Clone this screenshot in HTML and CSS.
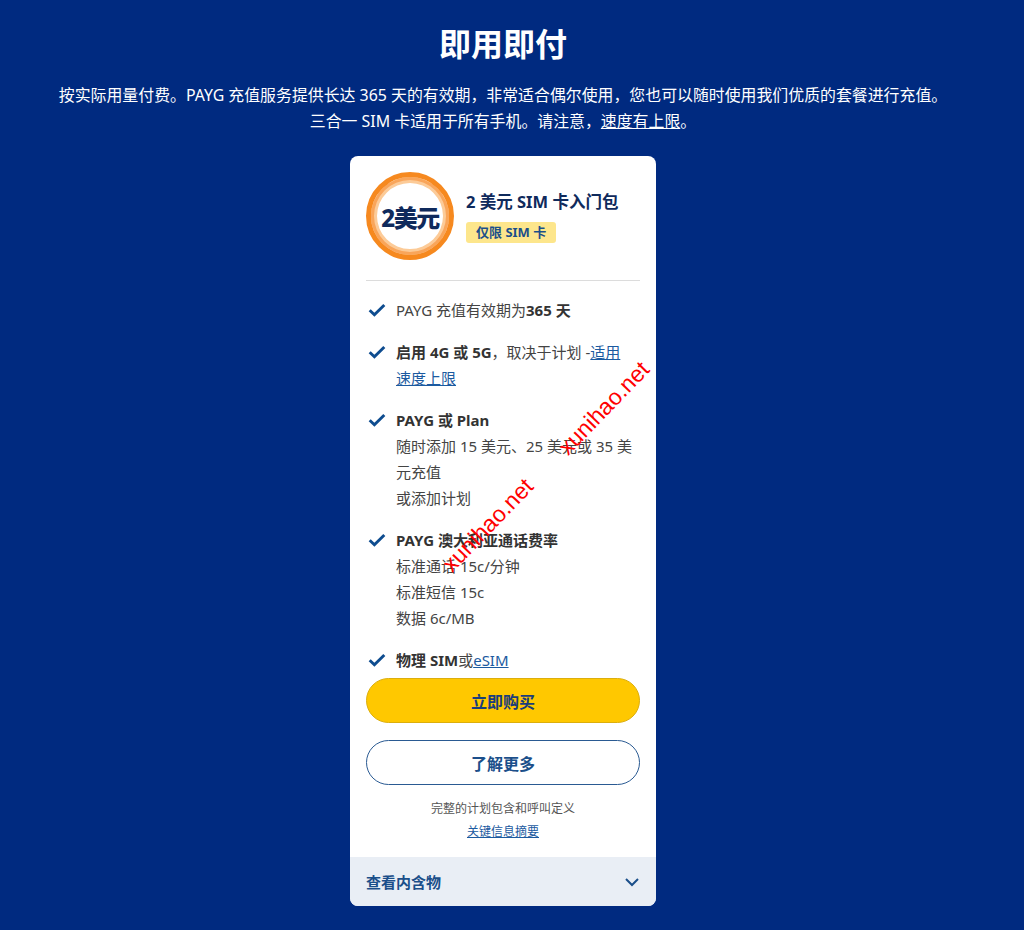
FILE: index.html
```html
<!DOCTYPE html>
<html lang="zh-CN">
<head>
    <meta charset="UTF-8">
    <meta name="viewport" content="width=device-width, initial-scale=1.0">
    <title>即用即付</title>
    <link rel="stylesheet" href="styles.css">
</head>
<body>

<div class="page">
    <header class="intro">
        <h1>即用即付</h1>
        <p>按实际用量付费。PAYG 充值服务提供长达 365 天的有效期，非常适合偶尔使用，您也可以随时使用我们优质的套餐进行充值。<br>
        三合一 SIM 卡适用于所有手机。请注意，<a href="#">速度有上限</a>。</p>
    </header>

    <!-- Starter kit card -->
    <div class="plan-card">
        <div class="card-body">
            <div class="plan-head">
                <div class="price-badge">2美元</div>
                <div>
                    <h3 class="plan-title">2 美元 SIM 卡入门包</h3>
                    <span class="plan-tag">仅限 SIM 卡</span>
                </div>
            </div>

            <ul class="features">
                <li>
                    <svg class="tick" viewBox="0 0 16 12"><path d="M1.5 6.2l4.2 4 8.8-8.7"/></svg>
                    <div>PAYG 充值有效期为<b>365 天</b></div>
                </li>
                <li>
                    <svg class="tick" viewBox="0 0 16 12"><path d="M1.5 6.2l4.2 4 8.8-8.7"/></svg>
                    <div><b>启用 4G 或 5G</b>，取决于计划 -<a href="#">适用<br>速度上限</a></div>
                </li>
                <li>
                    <svg class="tick" viewBox="0 0 16 12"><path d="M1.5 6.2l4.2 4 8.8-8.7"/></svg>
                    <div><b>PAYG 或 Plan</b><br>随时添加 15 美元、25 美元或 35 美<br>元充值<br>或添加计划</div>
                </li>
                <li>
                    <svg class="tick" viewBox="0 0 16 12"><path d="M1.5 6.2l4.2 4 8.8-8.7"/></svg>
                    <div><b>PAYG 澳大利亚通话费率</b><br>标准通话 15c/分钟<br>标准短信 15c<br>数据 6c/MB</div>
                </li>
                <li>
                    <svg class="tick" viewBox="0 0 16 12"><path d="M1.5 6.2l4.2 4 8.8-8.7"/></svg>
                    <div><b>物理 SIM</b>或<a href="#">eSIM</a></div>
                </li>
            </ul>

            <button class="btn btn-buy">立即购买</button>
            <button class="btn btn-more">了解更多</button>

            <p class="fine-print">完整的计划包含和呼叫定义</p>
            <p class="fine-print"><a href="#">关键信息摘要</a></p>
        </div>

        <div class="card-foot">
            <span>查看内含物</span>
            <svg class="chevron" viewBox="0 0 16 10"><path d="M2 2l6 6 6-6"/></svg>
        </div>
    </div>

    <!-- watermark overlay -->
    <span class="watermark mark-one">xunihao.net</span>
    <span class="watermark mark-two">xunihao.net</span>
</div>

</body>
</html>
```

FILE: styles.css
```css
body {
    margin: 0;
    padding: 0;
    background-color: #002a80;
    font-family: "Noto Sans", "Noto Sans CJK SC", sans-serif;
    color: #fff;
}
.page {
    position: relative;
    min-height: 930px;
    margin-right: 18px;
}
.intro {
    text-align: center;
    padding-top: 22px;
}
.intro h1 {
    margin: 0;
    font-size: 32px;
    line-height: 44px;
    font-weight: 700;
}
.intro p {
    margin: 16px 0 0;
    font-size: 15.9px;
    line-height: 26px;
}
.intro a {
    color: #fff;
}
.plan-card {
    width: 306px;
    margin: 22px auto 0;
    background-color: #fff;
    border-radius: 8px;
    overflow: hidden;
    color: #444;
}
.card-body {
    padding: 16px 16px 14px;
}
.plan-head {
    display: flex;
    align-items: center;
    gap: 12px;
    padding-bottom: 20px;
    border-bottom: 1px solid #dcdcdc;
}
.price-badge {
    width: 88px;
    height: 88px;
    flex-shrink: 0;
    box-sizing: border-box;
    border-radius: 50%;
    border: 5px solid #f6891f;
    box-shadow: inset 0 0 0 3px #f9a55a, inset 0 0 0 6px #fccb98;
    background-color: #fff;
    display: flex;
    align-items: center;
    justify-content: center;
    color: #0f2a5c;
    font-size: 24px;
    font-weight: 800;
    letter-spacing: -1.5px;
}
.plan-title {
    margin: 0 0 6px;
    font-size: 16.5px;
    line-height: 24px;
    color: #0f2a5c;
    font-weight: 700;
}
.plan-tag {
    display: inline-block;
    background-color: #fde68c;
    color: #1b4f8a;
    font-size: 13px;
    font-weight: 700;
    line-height: 21px;
    padding: 0 10px;
    border-radius: 3px;
}
.features {
    list-style: none;
    margin: 0;
    padding: 16px 0 0;
    display: flex;
    flex-direction: column;
    gap: 16px;
}
.features li {
    display: flex;
    gap: 10px;
    font-size: 15px;
    line-height: 26px;
}
.features b {
    color: #333;
}
.features a {
    color: #1b5aa0;
}
.tick {
    width: 18px;
    height: 14px;
    flex-shrink: 0;
    margin-top: 6px;
    margin-left: 2px;
    fill: none;
    stroke: #0e4c8f;
    stroke-width: 2.6;
}
.btn {
    display: block;
    width: 100%;
    height: 45px;
    border-radius: 23px;
    font-family: inherit;
    font-size: 16px;
    font-weight: 700;
    cursor: pointer;
}
.btn-buy {
    margin-top: 5px;
    background-color: #ffc800;
    border: 1px solid #dcae0c;
    color: #1a3d7c;
}
.btn-more {
    margin-top: 17px;
    background-color: #fff;
    border: 1.5px solid #2a5a92;
    color: #1b4f8a;
}
.fine-print {
    margin: 0;
    text-align: center;
    font-size: 12px;
    line-height: 23px;
    color: #555;
}
.btn-more + .fine-print {
    margin-top: 12px;
}
.fine-print a {
    color: #1b5aa0;
}
.card-foot {
    display: flex;
    align-items: center;
    justify-content: space-between;
    height: 49px;
    padding: 0 16px;
    background-color: #e9eef5;
    color: #1b4f8a;
    font-size: 15px;
    font-weight: 700;
}
.chevron {
    width: 16px;
    height: 10px;
    fill: none;
    stroke: #1b4f8a;
    stroke-width: 2;
}
.watermark {
    position: absolute;
    font-family: "Liberation Sans", Arial, sans-serif;
    font-size: 23px;
    line-height: 23px;
    color: #ff0000;
    transform-origin: 0 100%;
    transform: rotate(-46deg);
    white-space: nowrap;
}
.mark-one {
    left: 571px;
    top: 436px;
}
.mark-two {
    left: 455px;
    top: 553px;
}
```
